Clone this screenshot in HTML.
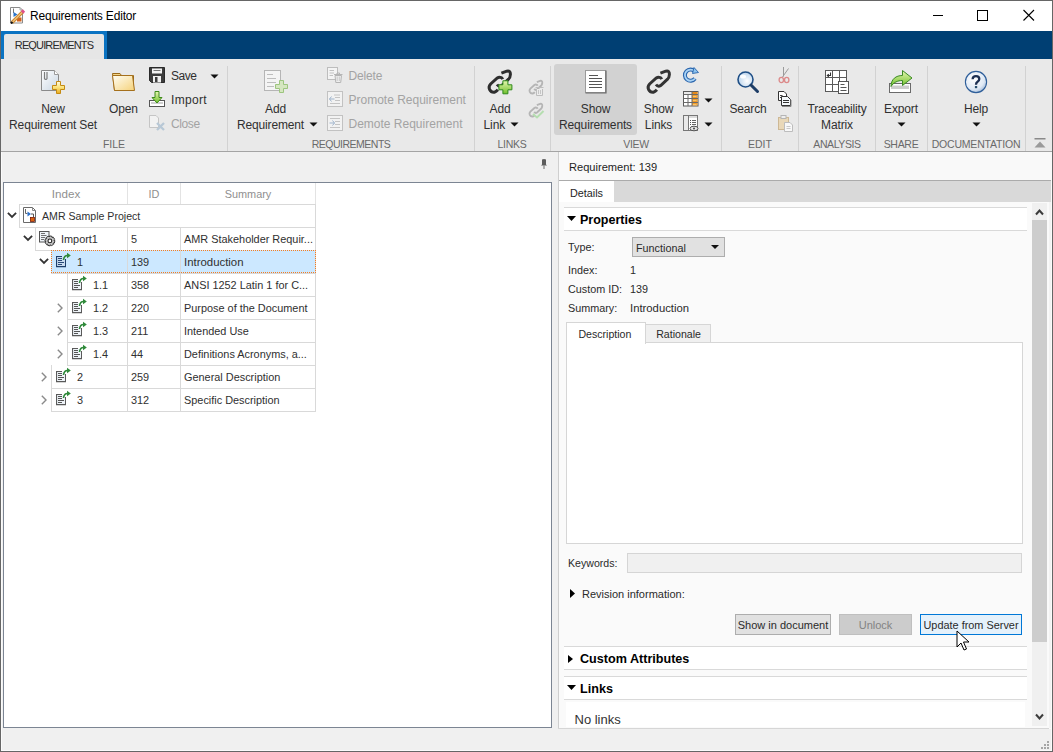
<!DOCTYPE html>
<html><head><meta charset="utf-8"><style>
html,body{margin:0;padding:0;}
body{width:1053px;height:752px;position:relative;overflow:hidden;background:#f0f0f0;font-family:"Liberation Sans",sans-serif;}
</style></head><body>
<div style="position:absolute;left:0px;top:0px;width:1053px;height:31px;background:#fff"></div>
<div style="position:absolute;left:30px;top:9.98px;font-size:12px;line-height:12px;color:#000;font-weight:normal;white-space:nowrap;font-family:'Liberation Sans',sans-serif;letter-spacing:-0.17px">Requirements Editor</div>
<svg style="position:absolute;left:9px;top:6px;" width="17" height="18" viewBox="0 0 17 18"><path d="M1.5 1.5H11L13.5 4V17H1.5Z" fill="#fff" stroke="#8a8a8a"/><path d="M11 1.5V4H13.5" fill="none" stroke="#aaa"/>
<path d="M4.5 2.5V7" stroke="#777"/><path d="M4.5 6L8.5 8.5L4.5 11Z" fill="#2a73c8"/><rect x="8" y="11.5" width="4.5" height="4" fill="#d2601a"/>
<path d="M3 16.5L14 5.5" stroke="#c9862e" stroke-width="3.2"/><path d="M3 16.5L14 5.5" stroke="#f3c27a" stroke-width="1.2"/><path d="M13 6.5L15 4.5" stroke="#e0508a" stroke-width="3.2"/><path d="M2 17.5L3.5 16" stroke="#111" stroke-width="2"/></svg>
<svg style="position:absolute;left:930px;top:9px;" width="16" height="14" viewBox="0 0 16 14"><line x1="3" y1="6.5" x2="13" y2="6.5" stroke="#000" stroke-width="1"/></svg>
<svg style="position:absolute;left:976px;top:9px;" width="14" height="14" viewBox="0 0 14 14"><rect x="1.5" y="1.5" width="10" height="10" fill="none" stroke="#000" stroke-width="1"/></svg>
<svg style="position:absolute;left:1021px;top:9px;" width="15" height="14" viewBox="0 0 15 14"><path d="M2.5 1L13 11.5M13 1L2.5 11.5" stroke="#000" stroke-width="1.1"/></svg>
<div style="position:absolute;left:1px;top:31px;width:1051px;height:28px;background:#003f73"></div>
<div style="position:absolute;left:1px;top:31px;width:106px;height:28px;background:#0a73c2"></div>
<div style="position:absolute;left:4px;top:34px;width:100px;height:25px;background:#e6e6e6;border-radius:2px 2px 0 0"></div>
<div style="position:absolute;left:-246px;width:600px;text-align:center;top:39.98px;font-size:11px;line-height:11px;color:#2a2a2a;font-weight:normal;white-space:nowrap;font-family:'Liberation Sans',sans-serif;letter-spacing:-0.85px">REQUIREMENTS</div>
<div style="position:absolute;left:1px;top:59px;width:1051px;height:92px;background:#e9e9e9"></div>
<div style="position:absolute;left:1px;top:151px;width:1051px;height:1px;background:#a4a4a4"></div>
<div style="position:absolute;left:227px;top:66px;width:1px;height:85px;background:#d2d2d2"></div>
<div style="position:absolute;left:474px;top:66px;width:1px;height:85px;background:#d2d2d2"></div>
<div style="position:absolute;left:550px;top:66px;width:1px;height:85px;background:#d2d2d2"></div>
<div style="position:absolute;left:721px;top:66px;width:1px;height:85px;background:#d2d2d2"></div>
<div style="position:absolute;left:798px;top:66px;width:1px;height:85px;background:#d2d2d2"></div>
<div style="position:absolute;left:875px;top:66px;width:1px;height:85px;background:#d2d2d2"></div>
<div style="position:absolute;left:927px;top:66px;width:1px;height:85px;background:#d2d2d2"></div>
<div style="position:absolute;left:1025px;top:66px;width:1px;height:85px;background:#d2d2d2"></div>
<div style="position:absolute;left:-186px;width:600px;text-align:center;top:139.02px;font-size:10.5px;line-height:10.5px;color:#6a6a6a;font-weight:normal;white-space:nowrap;font-family:'Liberation Sans',sans-serif;letter-spacing:0px">FILE</div>
<div style="position:absolute;left:51px;width:600px;text-align:center;top:139.02px;font-size:10.5px;line-height:10.5px;color:#6a6a6a;font-weight:normal;white-space:nowrap;font-family:'Liberation Sans',sans-serif;letter-spacing:-0.5px">REQUIREMENTS</div>
<div style="position:absolute;left:212px;width:600px;text-align:center;top:139.02px;font-size:10.5px;line-height:10.5px;color:#6a6a6a;font-weight:normal;white-space:nowrap;font-family:'Liberation Sans',sans-serif;letter-spacing:-0.3px">LINKS</div>
<div style="position:absolute;left:336px;width:600px;text-align:center;top:139.02px;font-size:10.5px;line-height:10.5px;color:#6a6a6a;font-weight:normal;white-space:nowrap;font-family:'Liberation Sans',sans-serif;letter-spacing:-0.3px">VIEW</div>
<div style="position:absolute;left:460px;width:600px;text-align:center;top:139.02px;font-size:10.5px;line-height:10.5px;color:#6a6a6a;font-weight:normal;white-space:nowrap;font-family:'Liberation Sans',sans-serif;letter-spacing:0px">EDIT</div>
<div style="position:absolute;left:537px;width:600px;text-align:center;top:139.02px;font-size:10.5px;line-height:10.5px;color:#6a6a6a;font-weight:normal;white-space:nowrap;font-family:'Liberation Sans',sans-serif;letter-spacing:-0.4px">ANALYSIS</div>
<div style="position:absolute;left:601px;width:600px;text-align:center;top:139.02px;font-size:10.5px;line-height:10.5px;color:#6a6a6a;font-weight:normal;white-space:nowrap;font-family:'Liberation Sans',sans-serif;letter-spacing:-0.3px">SHARE</div>
<div style="position:absolute;left:676px;width:600px;text-align:center;top:139.02px;font-size:10.5px;line-height:10.5px;color:#6a6a6a;font-weight:normal;white-space:nowrap;font-family:'Liberation Sans',sans-serif;letter-spacing:-0.2px">DOCUMENTATION</div>
<div style="position:absolute;left:1px;top:152px;width:550px;height:31px;background:#f0f0f0"></div>
<div style="position:absolute;left:3px;top:182px;width:549px;height:546px;background:#fff;border:1px solid #7c8593;box-sizing:border-box"></div>
<div style="position:absolute;left:558px;top:152px;width:494px;height:577px;background:#fafafa"></div>
<div style="position:absolute;left:558px;top:152px;width:1px;height:577px;background:#cfcfcf"></div>
<div style="position:absolute;left:559px;top:152px;width:492px;height:28px;background:#f9f9f9"></div>
<div style="position:absolute;left:559px;top:180px;width:492px;height:1px;background:#ababab"></div>
<div style="position:absolute;left:569px;top:162.01px;font-size:11.1px;line-height:11.1px;color:#1e1e1e;font-weight:normal;white-space:nowrap;font-family:'Liberation Sans',sans-serif;">Requirement: 139</div>
<div style="position:absolute;left:559px;top:181px;width:492px;height:21px;background:#d9d9d9"></div>
<div style="position:absolute;left:559px;top:181px;width:55px;height:21px;background:#ffffff"></div>
<div style="position:absolute;left:570px;top:188.04px;font-size:10.8px;line-height:10.8px;color:#1e1e1e;font-weight:normal;white-space:nowrap;font-family:'Liberation Sans',sans-serif;">Details</div>
<div style="position:absolute;left:1049px;top:202px;width:2px;height:526px;background:#f3f3f3"></div>
<svg width="0" height="0" style="position:absolute"><defs>
<linearGradient id="gDoc" x1="0" y1="0" x2="1" y2="1"><stop offset="0" stop-color="#ffffff"/><stop offset="1" stop-color="#c9d6e3"/></linearGradient>
<linearGradient id="gPlusY" x1="0" y1="0" x2="0" y2="1"><stop offset="0" stop-color="#fffbe0"/><stop offset="0.5" stop-color="#fbe37a"/><stop offset="1" stop-color="#e8a91c"/></linearGradient>
<linearGradient id="gFold" x1="0" y1="0" x2="1" y2="1"><stop offset="0" stop-color="#fffef5"/><stop offset="1" stop-color="#f5d27a"/></linearGradient>
<linearGradient id="gGreen" x1="0" y1="0" x2="0" y2="1"><stop offset="0" stop-color="#e6f7b0"/><stop offset="1" stop-color="#6fbf2a"/></linearGradient>
<radialGradient id="gHelp" cx="0.4" cy="0.35" r="0.7"><stop offset="0" stop-color="#ffffff"/><stop offset="0.7" stop-color="#dfe9f5"/><stop offset="1" stop-color="#9fb8d6"/></radialGradient>
<radialGradient id="gLens" cx="0.6" cy="0.6" r="0.6"><stop offset="0" stop-color="#ffffff"/><stop offset="1" stop-color="#b9d3ec"/></radialGradient>
</defs></svg>
<svg style="position:absolute;left:40px;top:69px;" width="26" height="26" viewBox="0 0 26 26"><path d="M1.5 1.5H14.5L18.5 5.5V21.5H1.5Z" fill="url(#gDoc)" stroke="#8a8a8a"/>
<path d="M14.5 1.5V5.5H18.5" fill="#fff" stroke="#9a9a9a"/>
<path d="M4.5 3V9.5A1.3 1.3 0 0 0 7 9.5V3" fill="none" stroke="#7d7d7d" stroke-width="1.2"/>
<path d="M16.5 12.5H20.5V16.5H24.5V20.5H20.5V24.5H16.5V20.5H12.5V16.5H16.5Z" fill="url(#gPlusY)" stroke="#c48a12"/></svg>
<div style="position:absolute;left:-247px;width:600px;text-align:center;top:102.98px;font-size:12px;line-height:12px;color:#303030;font-weight:normal;white-space:nowrap;font-family:'Liberation Sans',sans-serif;letter-spacing:-0.15px">New</div>
<div style="position:absolute;left:-247px;width:600px;text-align:center;top:118.98px;font-size:12px;line-height:12px;color:#303030;font-weight:normal;white-space:nowrap;font-family:'Liberation Sans',sans-serif;letter-spacing:-0.15px">Requirement Set</div>
<svg style="position:absolute;left:111px;top:72px;" width="27" height="20" viewBox="0 0 27 20"><path d="M1.5 1.5H9L10.5 3.5H22.5V18.5H3.5Z" fill="#f3d68a" stroke="#9a6a1a"/>
<path d="M1.5 3.5H21.5L23.5 18.5H3.5Z" fill="url(#gFold)" stroke="#a5701c"/></svg>
<div style="position:absolute;left:-176.5px;width:600px;text-align:center;top:102.98px;font-size:12px;line-height:12px;color:#303030;font-weight:normal;white-space:nowrap;font-family:'Liberation Sans',sans-serif;letter-spacing:-0.15px">Open</div>
<svg style="position:absolute;left:148px;top:66px;" width="18" height="18" viewBox="0 0 18 18"><path d="M1.5 1.5H16.5V16.5H3.5L1.5 14.5Z" fill="#3d3d3d" stroke="#2a2a2a"/>
<rect x="4" y="2.5" width="10" height="5" fill="#f4f4f4"/><rect x="5.5" y="4" width="7" height="1" fill="#777"/>
<rect x="5" y="10" width="8" height="6.5" fill="#f2f2f2"/><rect x="7" y="11" width="2.5" height="5" fill="#3d3d3d"/></svg>
<div style="position:absolute;left:171px;top:69.98px;font-size:12px;line-height:12px;color:#303030;font-weight:normal;white-space:nowrap;font-family:'Liberation Sans',sans-serif;letter-spacing:-0.5px">Save</div>
<svg style="position:absolute;left:210px;top:74px;" width="10" height="5" viewBox="0 0 10 5"><path d="M0.5 0.5H8.5L4.5 4.5Z" fill="#111"/></svg>
<svg style="position:absolute;left:148px;top:90px;" width="18" height="18" viewBox="0 0 18 18"><rect x="1.5" y="10.5" width="15" height="6" fill="#fff" stroke="#555"/><rect x="3" y="12" width="12" height="2" fill="#cfcfcf"/>
<path d="M7 1.5H11V7.5H14L9 13L4 7.5H7Z" fill="url(#gGreen)" stroke="#3f8a1a"/></svg>
<div style="position:absolute;left:171px;top:93.98px;font-size:12px;line-height:12px;color:#303030;font-weight:normal;white-space:nowrap;font-family:'Liberation Sans',sans-serif;letter-spacing:0.3px">Import</div>
<svg style="position:absolute;left:148px;top:114px;" width="18" height="18" viewBox="0 0 18 18"><path d="M1.5 1.5H8L10.5 4V13.5H1.5Z" fill="#f2f2f2" stroke="#c5c5c5"/>
<path d="M9 9L16 16M16 9L9 16" stroke="#b8c8d6" stroke-width="2.3"/></svg>
<div style="position:absolute;left:171px;top:117.98px;font-size:12px;line-height:12px;color:#a3a3a3;font-weight:normal;white-space:nowrap;font-family:'Liberation Sans',sans-serif;letter-spacing:-0.4px">Close</div>
<svg style="position:absolute;left:263px;top:69px;" width="26" height="26" viewBox="0 0 26 26"><rect x="1.5" y="1.5" width="16" height="20" fill="#f4f4f4" stroke="#b5b5b5"/>
<path d="M4 5.5H10M4 9.5H13M4 13.5H13M4 17.5H11" stroke="#bdbdbd"/>
<path d="M11.5 12.5H15.5V16.5H19.5V20.5H15.5V24.5H11.5V20.5H7.5V16.5H11.5Z" transform="translate(5,-1)" fill="#d5e6c0" stroke="#9cc57e"/></svg>
<div style="position:absolute;left:-24.5px;width:600px;text-align:center;top:102.98px;font-size:12px;line-height:12px;color:#303030;font-weight:normal;white-space:nowrap;font-family:'Liberation Sans',sans-serif;letter-spacing:-0.15px">Add</div>
<div style="position:absolute;left:237px;top:118.98px;font-size:12px;line-height:12px;color:#303030;font-weight:normal;white-space:nowrap;font-family:'Liberation Sans',sans-serif;letter-spacing:-0.15px">Requirement</div>
<svg style="position:absolute;left:309px;top:122px;" width="10" height="5" viewBox="0 0 10 5"><path d="M0.5 0.5H8.5L4.5 4.5Z" fill="#111"/></svg>
<svg style="position:absolute;left:326px;top:66px;" width="18" height="18" viewBox="0 0 18 18"><rect x="1.5" y="1.5" width="10" height="12" fill="#f4f4f4" stroke="#bdbdbd"/>
<path d="M3.5 4.5H8M3.5 7H8M3.5 9.5H7" stroke="#c2c2c2"/>
<path d="M8 8.5H16.5M11 8.5V7H13.5V8.5" fill="none" stroke="#b5b5b5"/><path d="M9 9.5L9.8 16.5H14.7L15.5 9.5Z" fill="#eeeeee" stroke="#b5b5b5"/><path d="M11.2 10.5V15M13.3 10.5V15" stroke="#c8c8c8"/></svg>
<div style="position:absolute;left:348.5px;top:69.98px;font-size:12px;line-height:12px;color:#a3a3a3;font-weight:normal;white-space:nowrap;font-family:'Liberation Sans',sans-serif;letter-spacing:-0.15px">Delete</div>
<svg style="position:absolute;left:326px;top:90px;" width="18" height="18" viewBox="0 0 18 18"><rect x="1.5" y="1.5" width="15" height="15" fill="#f2f2f2" stroke="#c2c2c2"/>
<path d="M8 5H14M9 7.5H14M9 10.5H14M4 13.5H14" stroke="#c4c4c4"/><path d="M3.5 9H8.5M5.5 6.5L3.5 9L5.5 11.5" fill="none" stroke="#9fb4cc"/></svg>
<div style="position:absolute;left:348.5px;top:93.98px;font-size:12px;line-height:12px;color:#a3a3a3;font-weight:normal;white-space:nowrap;font-family:'Liberation Sans',sans-serif;letter-spacing:0px">Promote Requirement</div>
<svg style="position:absolute;left:326px;top:114px;" width="18" height="18" viewBox="0 0 18 18"><rect x="1.5" y="1.5" width="15" height="15" fill="#f2f2f2" stroke="#c2c2c2"/>
<path d="M4 4.5H14M9 7.5H14M9 10.5H14M4 13.5H14" stroke="#c4c4c4"/><path d="M3.5 9H8.5M6.5 6.5L8.5 9L6.5 11.5" fill="none" stroke="#9fb4cc"/></svg>
<div style="position:absolute;left:348.5px;top:117.98px;font-size:12px;line-height:12px;color:#a3a3a3;font-weight:normal;white-space:nowrap;font-family:'Liberation Sans',sans-serif;letter-spacing:0px">Demote Requirement</div>
<svg style="position:absolute;left:485px;top:68px;" width="29" height="28" viewBox="0 0 29 28"><g fill="none" stroke="#2e2e2e" stroke-width="3"><path d="M16.4 5.2L21.8 3.2Q25.6 2.2 25.4 6.5Q25.2 9.4 23.8 10.8L16.7 17.5Q14 19.3 12 16.5"/>
<path d="M17.8 11.2Q16.8 9.2 15 9.2Q13.5 9.1 12.3 9.9L5.6 16Q3.2 18.5 4.6 21.5Q6.2 24.6 9.4 24.2Q11.3 23.7 12.9 21.8"/></g>
<path d="M17.9 12.8H22.9V16.8H26.9V21.8H22.9V25.8H17.9V21.8H13.9V16.8H17.9Z" fill="url(#gGreen)" stroke="#2f8a1c"/></svg>
<div style="position:absolute;left:200px;width:600px;text-align:center;top:102.98px;font-size:12px;line-height:12px;color:#303030;font-weight:normal;white-space:nowrap;font-family:'Liberation Sans',sans-serif;letter-spacing:-0.15px">Add</div>
<div style="position:absolute;left:483.6px;top:118.98px;font-size:12px;line-height:12px;color:#303030;font-weight:normal;white-space:nowrap;font-family:'Liberation Sans',sans-serif;letter-spacing:-0.15px">Link</div>
<svg style="position:absolute;left:510px;top:122px;" width="10" height="5" viewBox="0 0 10 5"><path d="M0.5 0.5H8.5L4.5 4.5Z" fill="#111"/></svg>
<svg style="position:absolute;left:527px;top:79px;" width="18" height="18" viewBox="0 0 18 18"><g transform="scale(0.6)" fill="none" stroke="#b5b5b5" stroke-width="3.2"><path d="M16.4 5.2L21.8 3.2Q25.6 2.2 25.4 6.5Q25.2 9.4 23.8 10.8L16.7 17.5Q14 19.3 12 16.5"/>
<path d="M17.8 11.2Q16.8 9.2 15 9.2Q13.5 9.1 12.3 9.9L5.6 16Q3.2 18.5 4.6 21.5Q6.2 24.6 9.4 24.2Q11.3 23.7 12.9 21.8"/></g>
<path d="M8.5 8.5H16.5M9.5 10V16.5H15.5V10" fill="#ececec" stroke="#bdbdbd"/><path d="M11.5 11V15M13.5 11V15" stroke="#c5c5c5"/></svg>
<svg style="position:absolute;left:527px;top:102px;" width="18" height="18" viewBox="0 0 18 18"><g transform="scale(0.6)" fill="none" stroke="#b5b5b5" stroke-width="3.2"><path d="M16.4 5.2L21.8 3.2Q25.6 2.2 25.4 6.5Q25.2 9.4 23.8 10.8L16.7 17.5Q14 19.3 12 16.5"/>
<path d="M17.8 11.2Q16.8 9.2 15 9.2Q13.5 9.1 12.3 9.9L5.6 16Q3.2 18.5 4.6 21.5Q6.2 24.6 9.4 24.2Q11.3 23.7 12.9 21.8"/></g>
<path d="M6 12L10 15.5L16.5 9" fill="none" stroke="#b5deb0" stroke-width="2"/></svg>
<div style="position:absolute;left:554px;top:64px;width:83px;height:71px;background:#d2d2d2;border-radius:3px"></div>
<svg style="position:absolute;left:584px;top:69px;" width="24" height="26" viewBox="0 0 24 26"><rect x="1.5" y="1.5" width="20" height="22" fill="#fff" stroke="#9a9a9a"/>
<path d="M5 6.5H14M5 9.5H18M5 12.5H18M5 15.5H18M5 18.5H18" stroke="#555"/><path d="M1.5 24H22V1.5" fill="none" stroke="#6a6a6a" stroke-width="1.2"/></svg>
<div style="position:absolute;left:295.5px;width:600px;text-align:center;top:102.98px;font-size:12px;line-height:12px;color:#303030;font-weight:normal;white-space:nowrap;font-family:'Liberation Sans',sans-serif;letter-spacing:-0.15px">Show</div>
<div style="position:absolute;left:295.5px;width:600px;text-align:center;top:118.98px;font-size:12px;line-height:12px;color:#303030;font-weight:normal;white-space:nowrap;font-family:'Liberation Sans',sans-serif;letter-spacing:-0.15px">Requirements</div>
<svg style="position:absolute;left:644px;top:68px;" width="29" height="28" viewBox="0 0 29 28"><g fill="none" stroke="#333" stroke-width="3"><path d="M16.4 5.2L21.8 3.2Q25.6 2.2 25.4 6.5Q25.2 9.4 23.8 10.8L16.7 17.5Q14 19.3 12 16.5"/>
<path d="M17.8 11.2Q16.8 9.2 15 9.2Q13.5 9.1 12.3 9.9L5.6 16Q3.2 18.5 4.6 21.5Q6.2 24.6 9.4 24.2Q11.3 23.7 12.9 21.8"/></g></svg>
<div style="position:absolute;left:358.5px;width:600px;text-align:center;top:102.98px;font-size:12px;line-height:12px;color:#303030;font-weight:normal;white-space:nowrap;font-family:'Liberation Sans',sans-serif;letter-spacing:-0.15px">Show</div>
<div style="position:absolute;left:358.5px;width:600px;text-align:center;top:118.98px;font-size:12px;line-height:12px;color:#303030;font-weight:normal;white-space:nowrap;font-family:'Liberation Sans',sans-serif;letter-spacing:-0.15px">Links</div>
<svg style="position:absolute;left:682px;top:66px;" width="18" height="18" viewBox="0 0 18 18"><path d="M12.5 5.2A5.6 5.6 0 1 0 13 12.5" fill="none" stroke="#2a65ad" stroke-width="4"/><path d="M12.5 5.2A5.6 5.6 0 1 0 13 12.5" fill="none" stroke="#a9d3f5" stroke-width="1.8"/>
<path d="M12 1.5L16.5 6.5L10.5 7.5Z" fill="#8cc3ee" stroke="#2a65ad" stroke-width="0.9"/></svg>
<svg style="position:absolute;left:682px;top:90px;" width="18" height="18" viewBox="0 0 18 18"><rect x="1.5" y="1.5" width="14.5" height="14.5" fill="#fff" stroke="#5a5a5a"/><rect x="10" y="2" width="5.5" height="13.5" fill="#f29a26"/><rect x="2" y="2" width="13.5" height="2.5" fill="#e8e8e8"/><rect x="10" y="2" width="5.5" height="2.5" fill="#e58a1a"/>
<path d="M1.5 4.5H16M1.5 8.5H16M1.5 12.5H16M6 4.5V16M10 1.5V16" stroke="#6a6a6a" stroke-width="1"/><path d="M11 6.5H14.5M11 10.5H14.5M11 14.5H14.5" stroke="#f7c46a" stroke-width="1"/></svg>
<svg style="position:absolute;left:704px;top:98px;" width="10" height="5" viewBox="0 0 10 5"><path d="M0.5 0.5H8.5L4.5 4.5Z" fill="#111"/></svg>
<svg style="position:absolute;left:682px;top:114px;" width="18" height="18" viewBox="0 0 18 18"><rect x="1.5" y="1.5" width="14" height="15" fill="#fff" stroke="#777"/><rect x="2" y="2" width="4" height="14" fill="#e9e9e9"/><path d="M6.5 1.5V16.5" stroke="#777"/><rect x="7" y="2" width="8" height="2" fill="#dcdcdc"/>
<path d="M8 6.5H9M8 8.5H9M8 10.5H9" stroke="#555"/><path d="M10 6.5H14M10 8.5H14M10 10.5H14" stroke="#666"/><ellipse cx="12" cy="14.5" rx="4" ry="2.3" fill="#e6e6e6" stroke="#555" stroke-width="1"/><circle cx="12" cy="14.5" r="1.1" fill="#555"/></svg>
<svg style="position:absolute;left:704px;top:122px;" width="10" height="5" viewBox="0 0 10 5"><path d="M0.5 0.5H8.5L4.5 4.5Z" fill="#111"/></svg>
<svg style="position:absolute;left:736px;top:70px;" width="24" height="24" viewBox="0 0 24 24"><circle cx="9.5" cy="9.5" r="7.5" fill="url(#gLens)" stroke="#1f4f86" stroke-width="1.6"/><ellipse cx="7" cy="6.5" rx="3" ry="2" fill="#fff" opacity="0.9"/>
<path d="M15 15L21.5 21.5" stroke="#1d3d66" stroke-width="3" stroke-linecap="round"/></svg>
<div style="position:absolute;left:448px;width:600px;text-align:center;top:102.98px;font-size:12px;line-height:12px;color:#303030;font-weight:normal;white-space:nowrap;font-family:'Liberation Sans',sans-serif;letter-spacing:-0.15px">Search</div>
<svg style="position:absolute;left:776px;top:66px;" width="18" height="18" viewBox="0 0 18 18"><path d="M7.5 1V10.5M12.5 2.5L6.5 11" stroke="#9a9a9a" stroke-width="1"/><ellipse cx="5.3" cy="14" rx="2.2" ry="2.6" fill="none" stroke="#dc8a8a" stroke-width="1.3"/><ellipse cx="10.7" cy="14" rx="2.2" ry="2.6" fill="none" stroke="#dc8a8a" stroke-width="1.3"/></svg>
<svg style="position:absolute;left:776px;top:90px;" width="18" height="18" viewBox="0 0 18 18"><path d="M2.5 1.5H8L10.5 4V10.5H2.5Z" fill="#fff" stroke="#333"/><path d="M4 5.5H6.5M4 7.5H6.5" stroke="#444"/><path d="M5.5 6.5H11.5L14.5 9.5V15.5H5.5Z" fill="#f4f8fb" stroke="#333"/><path d="M7 10.5H13M7 12.5H13" stroke="#333"/><path d="M6 16.5H15V10" fill="none" stroke="#888"/></svg>
<svg style="position:absolute;left:776px;top:114px;" width="18" height="18" viewBox="0 0 18 18"><rect x="2.5" y="3.5" width="10" height="12" fill="#e9d8b8" stroke="#cdb895"/><rect x="5" y="1.5" width="5" height="3" fill="#eeeeee" stroke="#b5b5b5"/>
<path d="M8.5 8.5H14L16.5 11V17.5H8.5Z" fill="#f8f8f8" stroke="#bdbdbd"/><path d="M10.5 12.5H14.5M10.5 14.5H14.5" stroke="#c8c8c8"/></svg>
<svg style="position:absolute;left:824px;top:69px;" width="27" height="27" viewBox="0 0 27 27"><rect x="1.5" y="1.5" width="21" height="21" fill="#fff" stroke="#5a5a5a"/><path d="M8.5 1.5V22.5M15.5 1.5V22.5M1.5 8.5H22.5M1.5 15.5H22.5" stroke="#5a5a5a"/>
<path d="M6.5 3.5V6.5H3.5M4.8 5.2L3.3 6.5L4.8 7.8" fill="none" stroke="#333" stroke-width="1.1"/>
<rect x="14.5" y="12.5" width="10" height="12" fill="#fff" stroke="#555"/><path d="M16.5 15.5H20.5M16.5 18.5H22.5M16.5 21.5H22.5" stroke="#555"/></svg>
<div style="position:absolute;left:537px;width:600px;text-align:center;top:102.98px;font-size:12px;line-height:12px;color:#303030;font-weight:normal;white-space:nowrap;font-family:'Liberation Sans',sans-serif;letter-spacing:-0.15px">Traceability</div>
<div style="position:absolute;left:537px;width:600px;text-align:center;top:118.98px;font-size:12px;line-height:12px;color:#303030;font-weight:normal;white-space:nowrap;font-family:'Liberation Sans',sans-serif;letter-spacing:-0.15px">Matrix</div>
<svg style="position:absolute;left:887px;top:68px;" width="27" height="27" viewBox="0 0 27 27"><rect x="2.5" y="15.5" width="21" height="9" fill="#fff" stroke="#6a6a6a"/><rect x="4" y="17.5" width="18" height="3.5" fill="#cdcdcd"/>
<path d="M4 18.5C4 11 9 7.5 15.5 7.5V2.5L25 10L15.5 17.5V12.5C10.5 12.5 6.5 14.5 4 18.5Z" fill="url(#gGreen)" stroke="#3b8a24" stroke-width="1"/></svg>
<div style="position:absolute;left:601px;width:600px;text-align:center;top:102.98px;font-size:12px;line-height:12px;color:#303030;font-weight:normal;white-space:nowrap;font-family:'Liberation Sans',sans-serif;letter-spacing:-0.15px">Export</div>
<svg style="position:absolute;left:897px;top:122px;" width="10" height="5" viewBox="0 0 10 5"><path d="M0.5 0.5H8.5L4.5 4.5Z" fill="#111"/></svg>
<svg style="position:absolute;left:964px;top:70px;" width="24" height="24" viewBox="0 0 24 24"><circle cx="12" cy="12" r="10.6" fill="url(#gHelp)" stroke="#2f5f9a" stroke-width="1.1"/>
<path d="M8.6 9.3Q8.8 6.2 12 6.2Q15.3 6.2 15.3 9Q15.3 10.8 13.3 12Q12 12.8 12 14.8" fill="none" stroke="#1c2f52" stroke-width="2.3"/><rect x="10.9" y="16" width="2.3" height="2.2" fill="#2a5070"/></svg>
<div style="position:absolute;left:676px;width:600px;text-align:center;top:102.98px;font-size:12px;line-height:12px;color:#303030;font-weight:normal;white-space:nowrap;font-family:'Liberation Sans',sans-serif;letter-spacing:-0.15px">Help</div>
<svg style="position:absolute;left:972px;top:122px;" width="10" height="5" viewBox="0 0 10 5"><path d="M0.5 0.5H8.5L4.5 4.5Z" fill="#111"/></svg>
<svg style="position:absolute;left:1034px;top:137px;" width="12" height="12" viewBox="0 0 12 12"><rect x="0.5" y="1" width="11" height="1.5" fill="#8a8a8a"/><path d="M0.5 10.5L6 4.5L11.5 10.5Z" fill="#9a9a9a"/></svg>
<div style="position:absolute;left:-234px;width:600px;text-align:center;top:188.02px;font-size:11.6px;line-height:11.6px;color:#8f8f8f;font-weight:normal;white-space:nowrap;font-family:'Liberation Sans',sans-serif;">Index</div>
<div style="position:absolute;left:-146px;width:600px;text-align:center;top:189.01px;font-size:10.9px;line-height:10.9px;color:#8f8f8f;font-weight:normal;white-space:nowrap;font-family:'Liberation Sans',sans-serif;">ID</div>
<div style="position:absolute;left:-52px;width:600px;text-align:center;top:189.01px;font-size:10.9px;line-height:10.9px;color:#8f8f8f;font-weight:normal;white-space:nowrap;font-family:'Liberation Sans',sans-serif;">Summary</div>
<div style="position:absolute;left:127px;top:183px;width:1px;height:21px;background:#e3e3e3"></div>
<div style="position:absolute;left:180px;top:183px;width:1px;height:21px;background:#e3e3e3"></div>
<div style="position:absolute;left:315px;top:183px;width:1px;height:21px;background:#e3e3e3"></div>
<div style="position:absolute;left:19px;top:204px;width:1px;height:23px;background:#d9d9d9"></div>
<div style="position:absolute;left:19px;top:227px;width:297px;height:1px;background:#d9d9d9"></div>
<div style="position:absolute;left:19px;top:204px;width:297px;height:1px;background:#d9d9d9"></div>
<div style="position:absolute;left:315px;top:204px;width:1px;height:24px;background:#d9d9d9"></div>
<svg style="position:absolute;left:6.5px;top:212px;" width="10" height="7" viewBox="0 0 10 7"><path d="M0.9 0.9L5 5L9.1 0.9" fill="none" stroke="#333" stroke-width="1.8"/></svg>
<svg style="position:absolute;left:23px;top:207px;" width="15" height="17" viewBox="0 0 15 17"><path d="M0.5 0.5H9.5L12.5 3.5V15.5H0.5Z" fill="#fff" stroke="#6a6a6a" stroke-width="1"/><path d="M9.5 0.5V3.5H12.5" fill="none" stroke="#888"/>
<path d="M2.5 2V6.5H4.5" fill="none" stroke="#666"/><path d="M4.5 4.5L8 7L4.5 9.5Z" fill="#2a6fc9"/><path d="M8 7H10.5V10" fill="none" stroke="#555"/>
<rect x="7.4" y="10.4" width="4" height="4" fill="#d8620f" stroke="#7a1a05" stroke-width="0.8"/></svg>
<div style="position:absolute;left:42px;top:210.99px;font-size:10.6px;line-height:10.6px;color:#303030;font-weight:normal;white-space:nowrap;font-family:'Liberation Sans',sans-serif;">AMR Sample Project</div>
<div style="position:absolute;left:35px;top:227px;width:1px;height:23px;background:#d9d9d9"></div>
<div style="position:absolute;left:35px;top:250px;width:281px;height:1px;background:#d9d9d9"></div>
<div style="position:absolute;left:127px;top:227px;width:1px;height:23px;background:#d9d9d9"></div>
<div style="position:absolute;left:180px;top:227px;width:1px;height:23px;background:#d9d9d9"></div>
<div style="position:absolute;left:315px;top:227px;width:1px;height:24px;background:#d9d9d9"></div>
<svg style="position:absolute;left:22.5px;top:235px;" width="10" height="7" viewBox="0 0 10 7"><path d="M0.9 0.9L5 5L9.1 0.9" fill="none" stroke="#333" stroke-width="1.8"/></svg>
<svg style="position:absolute;left:39px;top:231px;" width="18" height="17" viewBox="0 0 18 17"><rect x="0.5" y="0.5" width="9.5" height="10.5" fill="#eef3f8" stroke="#555"/><path d="M2 2.5H6M2 4.5H7.5M2 6.5H6M2 8.5H5" stroke="#707070" stroke-width="1"/>
<path d="M15.89 9.65 L15.40 12.07 L14.16 12.04 L14.11 12.12 L14.61 13.25 L12.55 14.62 L11.70 13.72 L11.60 13.74 L11.15 14.89 L8.73 14.40 L8.76 13.16 L8.68 13.11 L7.55 13.61 L6.18 11.55 L7.08 10.70 L7.06 10.60 L5.91 10.15 L6.40 7.73 L7.64 7.76 L7.69 7.68 L7.19 6.55 L9.25 5.18 L10.10 6.08 L10.20 6.06 L10.65 4.91 L13.07 5.40 L13.04 6.64 L13.12 6.69 L14.25 6.19 L15.62 8.25 L14.72 9.10 L14.74 9.20Z" fill="#c8c8c8" stroke="#333" stroke-width="1"/><circle cx="10.9" cy="9.9" r="1.9" fill="#fff" stroke="#222" stroke-width="1.1"/></svg>
<div style="position:absolute;left:61px;top:234.01px;font-size:10.9px;line-height:10.9px;color:#303030;font-weight:normal;white-space:nowrap;font-family:'Liberation Sans',sans-serif;">Import1</div>
<div style="position:absolute;left:131px;top:234.01px;font-size:10.9px;line-height:10.9px;color:#303030;font-weight:normal;white-space:nowrap;font-family:'Liberation Sans',sans-serif;">5</div>
<div style="position:absolute;left:184px;top:234.01px;font-size:10.9px;line-height:10.9px;color:#303030;font-weight:normal;white-space:nowrap;font-family:'Liberation Sans',sans-serif;">AMR Stakeholder Requir...</div>
<div style="position:absolute;left:51px;top:250px;width:265px;height:23px;background:#cce8ff"></div>
<div style="position:absolute;left:51px;top:273px;width:265px;height:1px;background:#d9d9d9"></div>
<div style="position:absolute;left:127px;top:250px;width:1px;height:23px;background:#d9d9d9"></div>
<div style="position:absolute;left:180px;top:250px;width:1px;height:23px;background:#d9d9d9"></div>
<div style="position:absolute;left:315px;top:250px;width:1px;height:24px;background:#d9d9d9"></div>
<svg style="position:absolute;left:38.5px;top:258px;" width="10" height="7" viewBox="0 0 10 7"><path d="M0.9 0.9L5 5L9.1 0.9" fill="none" stroke="#333" stroke-width="1.8"/></svg>
<svg style="position:absolute;left:56px;top:252px;" width="16" height="16" viewBox="0 0 16 16"><path d="M0 4.5H6M9.5 7V15" stroke="#1f3f6a" stroke-width="1"/><rect x="1" y="5" width="8" height="9" fill="#c9dcef"/>
<path d="M0.5 4V15M0 14.6H10" stroke="#1f3f6a" stroke-width="1.2"/>
<path d="M2 6.5H6M2 8.5H6M2 10.5H8M2 12.5H6" stroke="#2a4a78" stroke-width="1"/>
<path d="M7.5 8Q8 3.5 11.5 3.5" fill="none" stroke="#2f8a3a" stroke-width="1.6"/><path d="M11 0.8L14.8 3.5L11 6.2Z" fill="#2f8a3a"/></svg>
<div style="position:absolute;left:77px;top:257.01px;font-size:10.9px;line-height:10.9px;color:#303030;font-weight:normal;white-space:nowrap;font-family:'Liberation Sans',sans-serif;">1</div>
<div style="position:absolute;left:131px;top:257.01px;font-size:10.9px;line-height:10.9px;color:#303030;font-weight:normal;white-space:nowrap;font-family:'Liberation Sans',sans-serif;">139</div>
<div style="position:absolute;left:184px;top:256.99px;font-size:11.4px;line-height:11.4px;color:#303030;font-weight:normal;white-space:nowrap;font-family:'Liberation Sans',sans-serif;">Introduction</div>
<div style="position:absolute;left:67px;top:273px;width:1px;height:23px;background:#d9d9d9"></div>
<div style="position:absolute;left:67px;top:296px;width:249px;height:1px;background:#d9d9d9"></div>
<div style="position:absolute;left:127px;top:273px;width:1px;height:23px;background:#d9d9d9"></div>
<div style="position:absolute;left:180px;top:273px;width:1px;height:23px;background:#d9d9d9"></div>
<div style="position:absolute;left:315px;top:273px;width:1px;height:24px;background:#d9d9d9"></div>
<svg style="position:absolute;left:72px;top:275px;" width="16" height="16" viewBox="0 0 16 16"><path d="M0 4.5H6M9.5 7V15" stroke="#5a5a5a" stroke-width="1"/><rect x="1" y="5" width="8" height="9" fill="#eef3f8"/>
<path d="M0.5 4V15M0 14.6H10" stroke="#5a5a5a" stroke-width="1.2"/>
<path d="M2 6.5H6M2 8.5H6M2 10.5H8M2 12.5H6" stroke="#555" stroke-width="1"/>
<path d="M7.5 8Q8 3.5 11.5 3.5" fill="none" stroke="#2f8a3a" stroke-width="1.6"/><path d="M11 0.8L14.8 3.5L11 6.2Z" fill="#2f8a3a"/></svg>
<div style="position:absolute;left:93px;top:280.01px;font-size:10.9px;line-height:10.9px;color:#303030;font-weight:normal;white-space:nowrap;font-family:'Liberation Sans',sans-serif;">1.1</div>
<div style="position:absolute;left:131px;top:280.01px;font-size:10.9px;line-height:10.9px;color:#303030;font-weight:normal;white-space:nowrap;font-family:'Liberation Sans',sans-serif;">358</div>
<div style="position:absolute;left:184px;top:280.01px;font-size:10.9px;line-height:10.9px;color:#303030;font-weight:normal;white-space:nowrap;font-family:'Liberation Sans',sans-serif;">ANSI 1252 Latin 1 for C...</div>
<div style="position:absolute;left:67px;top:296px;width:1px;height:23px;background:#d9d9d9"></div>
<div style="position:absolute;left:67px;top:319px;width:249px;height:1px;background:#d9d9d9"></div>
<div style="position:absolute;left:127px;top:296px;width:1px;height:23px;background:#d9d9d9"></div>
<div style="position:absolute;left:180px;top:296px;width:1px;height:23px;background:#d9d9d9"></div>
<div style="position:absolute;left:315px;top:296px;width:1px;height:24px;background:#d9d9d9"></div>
<svg style="position:absolute;left:56.5px;top:302.5px;" width="7" height="10" viewBox="0 0 7 10"><path d="M0.8 0.8L5 5L0.8 9.2" fill="none" stroke="#8a8a8a" stroke-width="1.4"/></svg>
<svg style="position:absolute;left:72px;top:298px;" width="16" height="16" viewBox="0 0 16 16"><path d="M0 4.5H6M9.5 7V15" stroke="#5a5a5a" stroke-width="1"/><rect x="1" y="5" width="8" height="9" fill="#eef3f8"/>
<path d="M0.5 4V15M0 14.6H10" stroke="#5a5a5a" stroke-width="1.2"/>
<path d="M2 6.5H6M2 8.5H6M2 10.5H8M2 12.5H6" stroke="#555" stroke-width="1"/>
<path d="M7.5 8Q8 3.5 11.5 3.5" fill="none" stroke="#2f8a3a" stroke-width="1.6"/><path d="M11 0.8L14.8 3.5L11 6.2Z" fill="#2f8a3a"/></svg>
<div style="position:absolute;left:93px;top:303.01px;font-size:10.9px;line-height:10.9px;color:#303030;font-weight:normal;white-space:nowrap;font-family:'Liberation Sans',sans-serif;">1.2</div>
<div style="position:absolute;left:131px;top:303.01px;font-size:10.9px;line-height:10.9px;color:#303030;font-weight:normal;white-space:nowrap;font-family:'Liberation Sans',sans-serif;">220</div>
<div style="position:absolute;left:184px;top:303.01px;font-size:10.9px;line-height:10.9px;color:#303030;font-weight:normal;white-space:nowrap;font-family:'Liberation Sans',sans-serif;">Purpose of the Document</div>
<div style="position:absolute;left:67px;top:319px;width:1px;height:23px;background:#d9d9d9"></div>
<div style="position:absolute;left:67px;top:342px;width:249px;height:1px;background:#d9d9d9"></div>
<div style="position:absolute;left:127px;top:319px;width:1px;height:23px;background:#d9d9d9"></div>
<div style="position:absolute;left:180px;top:319px;width:1px;height:23px;background:#d9d9d9"></div>
<div style="position:absolute;left:315px;top:319px;width:1px;height:24px;background:#d9d9d9"></div>
<svg style="position:absolute;left:56.5px;top:325.5px;" width="7" height="10" viewBox="0 0 7 10"><path d="M0.8 0.8L5 5L0.8 9.2" fill="none" stroke="#8a8a8a" stroke-width="1.4"/></svg>
<svg style="position:absolute;left:72px;top:321px;" width="16" height="16" viewBox="0 0 16 16"><path d="M0 4.5H6M9.5 7V15" stroke="#5a5a5a" stroke-width="1"/><rect x="1" y="5" width="8" height="9" fill="#eef3f8"/>
<path d="M0.5 4V15M0 14.6H10" stroke="#5a5a5a" stroke-width="1.2"/>
<path d="M2 6.5H6M2 8.5H6M2 10.5H8M2 12.5H6" stroke="#555" stroke-width="1"/>
<path d="M7.5 8Q8 3.5 11.5 3.5" fill="none" stroke="#2f8a3a" stroke-width="1.6"/><path d="M11 0.8L14.8 3.5L11 6.2Z" fill="#2f8a3a"/></svg>
<div style="position:absolute;left:93px;top:326.01px;font-size:10.9px;line-height:10.9px;color:#303030;font-weight:normal;white-space:nowrap;font-family:'Liberation Sans',sans-serif;">1.3</div>
<div style="position:absolute;left:131px;top:326.01px;font-size:10.9px;line-height:10.9px;color:#303030;font-weight:normal;white-space:nowrap;font-family:'Liberation Sans',sans-serif;">211</div>
<div style="position:absolute;left:184px;top:326.01px;font-size:10.9px;line-height:10.9px;color:#303030;font-weight:normal;white-space:nowrap;font-family:'Liberation Sans',sans-serif;">Intended Use</div>
<div style="position:absolute;left:67px;top:342px;width:1px;height:23px;background:#d9d9d9"></div>
<div style="position:absolute;left:67px;top:365px;width:249px;height:1px;background:#d9d9d9"></div>
<div style="position:absolute;left:127px;top:342px;width:1px;height:23px;background:#d9d9d9"></div>
<div style="position:absolute;left:180px;top:342px;width:1px;height:23px;background:#d9d9d9"></div>
<div style="position:absolute;left:315px;top:342px;width:1px;height:24px;background:#d9d9d9"></div>
<svg style="position:absolute;left:56.5px;top:348.5px;" width="7" height="10" viewBox="0 0 7 10"><path d="M0.8 0.8L5 5L0.8 9.2" fill="none" stroke="#8a8a8a" stroke-width="1.4"/></svg>
<svg style="position:absolute;left:72px;top:344px;" width="16" height="16" viewBox="0 0 16 16"><path d="M0 4.5H6M9.5 7V15" stroke="#5a5a5a" stroke-width="1"/><rect x="1" y="5" width="8" height="9" fill="#eef3f8"/>
<path d="M0.5 4V15M0 14.6H10" stroke="#5a5a5a" stroke-width="1.2"/>
<path d="M2 6.5H6M2 8.5H6M2 10.5H8M2 12.5H6" stroke="#555" stroke-width="1"/>
<path d="M7.5 8Q8 3.5 11.5 3.5" fill="none" stroke="#2f8a3a" stroke-width="1.6"/><path d="M11 0.8L14.8 3.5L11 6.2Z" fill="#2f8a3a"/></svg>
<div style="position:absolute;left:93px;top:349.01px;font-size:10.9px;line-height:10.9px;color:#303030;font-weight:normal;white-space:nowrap;font-family:'Liberation Sans',sans-serif;">1.4</div>
<div style="position:absolute;left:131px;top:349.01px;font-size:10.9px;line-height:10.9px;color:#303030;font-weight:normal;white-space:nowrap;font-family:'Liberation Sans',sans-serif;">44</div>
<div style="position:absolute;left:184px;top:349.01px;font-size:10.9px;line-height:10.9px;color:#303030;font-weight:normal;white-space:nowrap;font-family:'Liberation Sans',sans-serif;">Definitions Acronyms, a...</div>
<div style="position:absolute;left:51px;top:365px;width:1px;height:23px;background:#d9d9d9"></div>
<div style="position:absolute;left:51px;top:388px;width:265px;height:1px;background:#d9d9d9"></div>
<div style="position:absolute;left:127px;top:365px;width:1px;height:23px;background:#d9d9d9"></div>
<div style="position:absolute;left:180px;top:365px;width:1px;height:23px;background:#d9d9d9"></div>
<div style="position:absolute;left:315px;top:365px;width:1px;height:24px;background:#d9d9d9"></div>
<svg style="position:absolute;left:40.5px;top:371.5px;" width="7" height="10" viewBox="0 0 7 10"><path d="M0.8 0.8L5 5L0.8 9.2" fill="none" stroke="#8a8a8a" stroke-width="1.4"/></svg>
<svg style="position:absolute;left:56px;top:367px;" width="16" height="16" viewBox="0 0 16 16"><path d="M0 4.5H6M9.5 7V15" stroke="#5a5a5a" stroke-width="1"/><rect x="1" y="5" width="8" height="9" fill="#eef3f8"/>
<path d="M0.5 4V15M0 14.6H10" stroke="#5a5a5a" stroke-width="1.2"/>
<path d="M2 6.5H6M2 8.5H6M2 10.5H8M2 12.5H6" stroke="#555" stroke-width="1"/>
<path d="M7.5 8Q8 3.5 11.5 3.5" fill="none" stroke="#2f8a3a" stroke-width="1.6"/><path d="M11 0.8L14.8 3.5L11 6.2Z" fill="#2f8a3a"/></svg>
<div style="position:absolute;left:77px;top:372.01px;font-size:10.9px;line-height:10.9px;color:#303030;font-weight:normal;white-space:nowrap;font-family:'Liberation Sans',sans-serif;">2</div>
<div style="position:absolute;left:131px;top:372.01px;font-size:10.9px;line-height:10.9px;color:#303030;font-weight:normal;white-space:nowrap;font-family:'Liberation Sans',sans-serif;">259</div>
<div style="position:absolute;left:184px;top:372.01px;font-size:10.9px;line-height:10.9px;color:#303030;font-weight:normal;white-space:nowrap;font-family:'Liberation Sans',sans-serif;">General Description</div>
<div style="position:absolute;left:51px;top:388px;width:1px;height:23px;background:#d9d9d9"></div>
<div style="position:absolute;left:51px;top:411px;width:265px;height:1px;background:#d9d9d9"></div>
<div style="position:absolute;left:127px;top:388px;width:1px;height:23px;background:#d9d9d9"></div>
<div style="position:absolute;left:180px;top:388px;width:1px;height:23px;background:#d9d9d9"></div>
<div style="position:absolute;left:315px;top:388px;width:1px;height:24px;background:#d9d9d9"></div>
<svg style="position:absolute;left:40.5px;top:394.5px;" width="7" height="10" viewBox="0 0 7 10"><path d="M0.8 0.8L5 5L0.8 9.2" fill="none" stroke="#8a8a8a" stroke-width="1.4"/></svg>
<svg style="position:absolute;left:56px;top:390px;" width="16" height="16" viewBox="0 0 16 16"><path d="M0 4.5H6M9.5 7V15" stroke="#5a5a5a" stroke-width="1"/><rect x="1" y="5" width="8" height="9" fill="#eef3f8"/>
<path d="M0.5 4V15M0 14.6H10" stroke="#5a5a5a" stroke-width="1.2"/>
<path d="M2 6.5H6M2 8.5H6M2 10.5H8M2 12.5H6" stroke="#555" stroke-width="1"/>
<path d="M7.5 8Q8 3.5 11.5 3.5" fill="none" stroke="#2f8a3a" stroke-width="1.6"/><path d="M11 0.8L14.8 3.5L11 6.2Z" fill="#2f8a3a"/></svg>
<div style="position:absolute;left:77px;top:395.01px;font-size:10.9px;line-height:10.9px;color:#303030;font-weight:normal;white-space:nowrap;font-family:'Liberation Sans',sans-serif;">3</div>
<div style="position:absolute;left:131px;top:395.01px;font-size:10.9px;line-height:10.9px;color:#303030;font-weight:normal;white-space:nowrap;font-family:'Liberation Sans',sans-serif;">312</div>
<div style="position:absolute;left:184px;top:395.01px;font-size:10.9px;line-height:10.9px;color:#303030;font-weight:normal;white-space:nowrap;font-family:'Liberation Sans',sans-serif;">Specific Description</div>
<div style="position:absolute;left:51px;top:250px;width:265px;height:23px;border:1px dotted #f57c1f;box-sizing:border-box"></div>
<div style="position:absolute;left:564px;top:207px;width:463px;height:1px;background:#d9d9d9"></div>
<div style="position:absolute;left:564px;top:208px;width:463px;height:22px;background:#ffffff"></div>
<div style="position:absolute;left:564px;top:230px;width:463px;height:1px;background:#d9d9d9"></div>
<svg style="position:absolute;left:567px;top:216px;" width="9" height="5" viewBox="0 0 9 5"><path d="M0 0H9L4.5 5Z" fill="#000"/></svg>
<div style="position:absolute;left:580px;top:213.94px;font-size:12.5px;line-height:12.5px;color:#000;font-weight:bold;white-space:nowrap;font-family:'Liberation Sans',sans-serif;">Properties</div>
<div style="position:absolute;left:568px;top:242.04px;font-size:10.8px;line-height:10.8px;color:#2a2a2a;font-weight:normal;white-space:nowrap;font-family:'Liberation Sans',sans-serif;">Type:</div>
<div style="position:absolute;left:632px;top:237px;width:93px;height:20px;background:#e1e1e1;border:1px solid #adadad;box-sizing:border-box"></div>
<div style="position:absolute;left:636px;top:243.04px;font-size:10.8px;line-height:10.8px;color:#2a2a2a;font-weight:normal;white-space:nowrap;font-family:'Liberation Sans',sans-serif;">Functional</div>
<svg style="position:absolute;left:711px;top:245px;" width="8" height="4" viewBox="0 0 8 4"><path d="M0 0H8L4.0 4Z" fill="#111"/></svg>
<div style="position:absolute;left:568px;top:265.04px;font-size:10.8px;line-height:10.8px;color:#2a2a2a;font-weight:normal;white-space:nowrap;font-family:'Liberation Sans',sans-serif;">Index:</div>
<div style="position:absolute;left:630px;top:265.04px;font-size:10.8px;line-height:10.8px;color:#2a2a2a;font-weight:normal;white-space:nowrap;font-family:'Liberation Sans',sans-serif;">1</div>
<div style="position:absolute;left:568px;top:284.04px;font-size:10.8px;line-height:10.8px;color:#2a2a2a;font-weight:normal;white-space:nowrap;font-family:'Liberation Sans',sans-serif;">Custom ID:</div>
<div style="position:absolute;left:630px;top:284.04px;font-size:10.8px;line-height:10.8px;color:#2a2a2a;font-weight:normal;white-space:nowrap;font-family:'Liberation Sans',sans-serif;">139</div>
<div style="position:absolute;left:568px;top:303.04px;font-size:10.8px;line-height:10.8px;color:#2a2a2a;font-weight:normal;white-space:nowrap;font-family:'Liberation Sans',sans-serif;">Summary:</div>
<div style="position:absolute;left:630px;top:302.96px;font-size:11.3px;line-height:11.3px;color:#2a2a2a;font-weight:normal;white-space:nowrap;font-family:'Liberation Sans',sans-serif;">Introduction</div>
<div style="position:absolute;left:566px;top:342px;width:457px;height:202px;background:#fff;border:1px solid #d6d6d6;box-sizing:border-box"></div>
<div style="position:absolute;left:645px;top:324px;width:66px;height:19px;background:#f0f0f0;border:1px solid #d6d6d6;box-sizing:border-box"></div>
<div style="position:absolute;left:566px;top:322px;width:80px;height:22px;background:#fff;border:1px solid #d6d6d6;border-bottom:none;box-sizing:border-box"></div>
<div style="position:absolute;left:578.4px;top:328.99px;font-size:10.6px;line-height:10.6px;color:#2a2a2a;font-weight:normal;white-space:nowrap;font-family:'Liberation Sans',sans-serif;">Description</div>
<div style="position:absolute;left:656.2px;top:328.99px;font-size:10.6px;line-height:10.6px;color:#2a2a2a;font-weight:normal;white-space:nowrap;font-family:'Liberation Sans',sans-serif;">Rationale</div>
<div style="position:absolute;left:568px;top:557.99px;font-size:10.6px;line-height:10.6px;color:#2a2a2a;font-weight:normal;white-space:nowrap;font-family:'Liberation Sans',sans-serif;">Keywords:</div>
<div style="position:absolute;left:627px;top:553px;width:395px;height:20px;background:#f0f0f0;border:1px solid #d5d5d5;box-sizing:border-box"></div>
<svg style="position:absolute;left:570px;top:589px;" width="5" height="9" viewBox="0 0 5 9"><path d="M0 0L5 4.5L0 9Z" fill="#000"/></svg>
<div style="position:absolute;left:582px;top:588.98px;font-size:11px;line-height:11px;color:#2a2a2a;font-weight:normal;white-space:nowrap;font-family:'Liberation Sans',sans-serif;">Revision information:</div>
<div style="position:absolute;left:735px;top:614px;width:96px;height:21px;background:#e1e1e1;border:1px solid #adadad;box-sizing:border-box"></div>
<div style="position:absolute;left:483px;width:600px;text-align:center;top:619.98px;font-size:11px;line-height:11px;color:#2a2a2a;font-weight:normal;white-space:nowrap;font-family:'Liberation Sans',sans-serif;">Show in document</div>
<div style="position:absolute;left:839px;top:614px;width:73px;height:21px;background:#cccccc;border:1px solid #bfbfbf;box-sizing:border-box"></div>
<div style="position:absolute;left:575.5px;width:600px;text-align:center;top:619.98px;font-size:11px;line-height:11px;color:#838383;font-weight:normal;white-space:nowrap;font-family:'Liberation Sans',sans-serif;">Unlock</div>
<div style="position:absolute;left:920px;top:614px;width:102px;height:21px;background:#e5f1fb;border:1px solid #0078d7;box-sizing:border-box"></div>
<div style="position:absolute;left:671px;width:600px;text-align:center;top:620.01px;font-size:10.9px;line-height:10.9px;color:#2a2a2a;font-weight:normal;white-space:nowrap;font-family:'Liberation Sans',sans-serif;">Update from Server</div>
<div style="position:absolute;left:564px;top:646px;width:463px;height:1px;background:#d9d9d9"></div>
<div style="position:absolute;left:564px;top:647px;width:463px;height:22px;background:#ffffff"></div>
<div style="position:absolute;left:564px;top:669px;width:463px;height:1px;background:#d9d9d9"></div>
<svg style="position:absolute;left:568px;top:655px;" width="5" height="8" viewBox="0 0 5 8"><path d="M0 0L5 4.0L0 8Z" fill="#000"/></svg>
<div style="position:absolute;left:580px;top:652.98px;font-size:12.6px;line-height:12.6px;color:#000;font-weight:bold;white-space:nowrap;font-family:'Liberation Sans',sans-serif;">Custom Attributes</div>
<div style="position:absolute;left:564px;top:676px;width:463px;height:1px;background:#d9d9d9"></div>
<div style="position:absolute;left:564px;top:677px;width:463px;height:22px;background:#ffffff"></div>
<div style="position:absolute;left:564px;top:699px;width:463px;height:1px;background:#d9d9d9"></div>
<svg style="position:absolute;left:567px;top:685px;" width="9" height="5" viewBox="0 0 9 5"><path d="M0 0H9L4.5 5Z" fill="#000"/></svg>
<div style="position:absolute;left:580px;top:682.98px;font-size:12.6px;line-height:12.6px;color:#000;font-weight:bold;white-space:nowrap;font-family:'Liberation Sans',sans-serif;">Links</div>
<div style="position:absolute;left:566px;top:702px;width:459px;height:25px;background:#ffffff"></div>
<div style="position:absolute;left:574.5px;top:713.01px;font-size:13px;line-height:13px;color:#333;font-weight:normal;white-space:nowrap;font-family:'Liberation Sans',sans-serif;">No links</div>
<div style="position:absolute;left:1032px;top:203px;width:15px;height:523px;background:#f0f0f0"></div>
<div style="position:absolute;left:1032px;top:220px;width:15px;height:422px;background:#cdcdcd"></div>
<svg style="position:absolute;left:1035px;top:208px;" width="9" height="8" viewBox="0 0 9 8"><path d="M1 6.5L4.5 2.5L8 6.5" fill="none" stroke="#3c3c3c" stroke-width="2"/></svg>
<svg style="position:absolute;left:1035px;top:713px;" width="9" height="8" viewBox="0 0 9 8"><path d="M1 1.5L4.5 5.5L8 1.5" fill="none" stroke="#3c3c3c" stroke-width="2"/></svg>
<div style="position:absolute;left:558px;top:728px;width:491px;height:1px;background:#d6d6d6"></div>
<svg style="position:absolute;left:956px;top:630px;" width="14" height="22" viewBox="0 0 14 22"><path d="M1 1V17L5 13L8 20L10.5 19L7.5 12H13Z" fill="#fff" stroke="#000" stroke-width="1"/></svg>
<svg style="position:absolute;left:540px;top:158px;" width="8" height="11" viewBox="0 0 8 11"><path d="M2 1.5Q4 0.5 6 1.5V6.5L7 7.5H1L2 6.5Z" fill="#5c5c5c"/><rect x="3.5" y="7.5" width="1" height="3.5" fill="#6a6a6a"/></svg>
<div style="position:absolute;left:1px;top:729px;width:1051px;height:22px;background:#f0f0f0"></div>
<div style="position:absolute;left:1px;top:152px;width:1px;height:598px;background:#fbfbfb"></div>
<div style="position:absolute;left:1px;top:750px;width:1051px;height:1px;background:#fbfbfb"></div>
<div style="position:absolute;left:1051px;top:202px;width:1px;height:548px;background:#fbfbfb"></div>
<div style="position:absolute;left:1047px;top:741px;width:2px;height:2px;background:#a6a6a6"></div>
<div style="position:absolute;left:1044px;top:744px;width:2px;height:2px;background:#a6a6a6"></div>
<div style="position:absolute;left:1047px;top:744px;width:2px;height:2px;background:#a6a6a6"></div>
<div style="position:absolute;left:1041px;top:747px;width:2px;height:2px;background:#a6a6a6"></div>
<div style="position:absolute;left:1044px;top:747px;width:2px;height:2px;background:#a6a6a6"></div>
<div style="position:absolute;left:1047px;top:747px;width:2px;height:2px;background:#a6a6a6"></div>
<div style="position:absolute;left:0px;top:0px;width:1053px;height:752px;border:1px solid #666;box-sizing:border-box"></div>
</body></html>
